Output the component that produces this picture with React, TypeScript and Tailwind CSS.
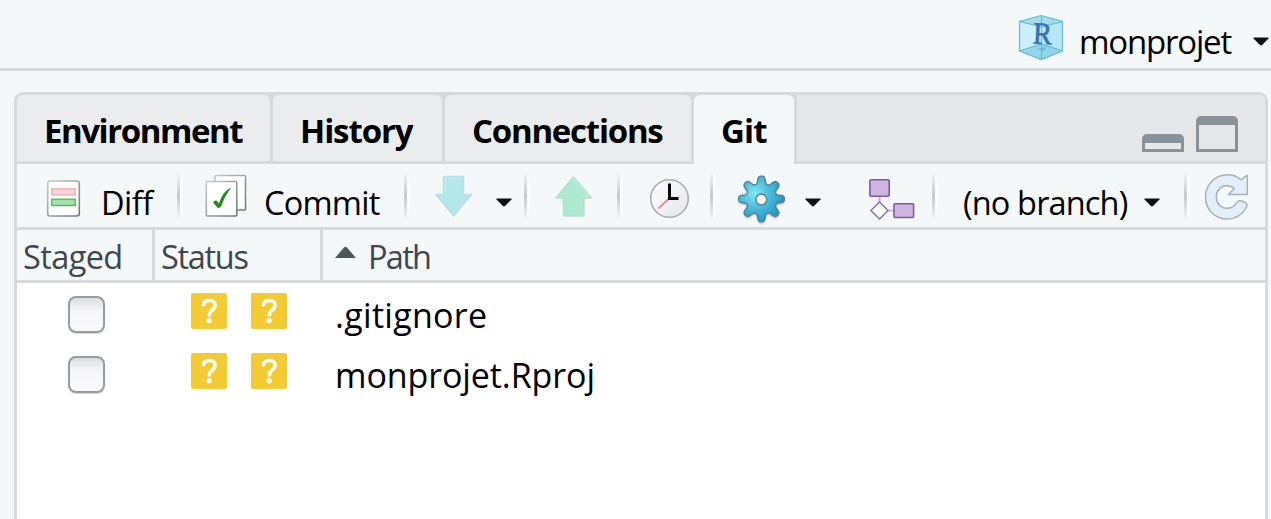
import type { ReactNode } from "react";

function ToolIcon({ x, w, className = "", children }: { x: number; w: number; className?: string; children: ReactNode }) {
  return (
    <svg width={w} height={63} viewBox={`${x} 164 ${w} 63`} className={`shrink-0 ${className}`}>
      {children}
    </svg>
  );
}

function Separator({ className }: { className: string }) {
  return (
    <div className={`mt-[7px] flex h-[50px] w-[6px] shrink-0 ${className}`}>
      <div className="w-[3px] bg-linear-to-b from-transparent via-[#c6c9cb] to-transparent" />
      <div className="w-[3px] bg-linear-to-b from-transparent via-white to-transparent" />
    </div>
  );
}

function Caret({ className = "" }: { className?: string }) {
  return (
    <svg width="16" height="9" viewBox="0 0 16 9" className={`shrink-0 ${className}`}>
      <path d="M0.5 0.5H15.5V1.5L8.8 8.2H7.2L0.5 1.5Z" fill="#111" />
    </svg>
  );
}

function ProjectIcon() {
  return (
    <svg width="46" height="47" viewBox="1018 14 46 47" className="shrink-0">
      <path d="M1041 15.5L1062.500 21.500V51L1041.500 59.500L1019.500 51V21.500Z" fill="#b9e5f8" />
      <path d="M1019.500 21.500L1041.500 27V59.500L1019.500 51Z" fill="#caf0fb" />
      <path d="M1019.500 51L1041.500 44L1062.500 51L1041.500 59.500Z" fill="#83cdea" opacity=".75" />
      <path d="M1019.500 21.500L1041 15.500L1062.500 21.500L1041.500 27Z" fill="#a5ddec" />
      <path d="M1041 15.500L1062.500 21.500V51L1041.500 59.500L1019.500 51V21.500ZM1019.500 21.500L1041.500 27L1062.500 21.500M1041.500 27V59.500M1041.500 16V27M1019.500 51L1041.500 44L1062.500 51" fill="none" stroke="#62bcd2" strokeWidth="1.2" />
      <text x="1033" y="44" fontFamily="Liberation Serif, serif" fontSize="31" fill="#386fb5" stroke="#386fb5" strokeWidth=".7" textLength="19" lengthAdjust="spacingAndGlyphs" transform="rotate(3 1041 34)">R</text>
      <path d="M1036 49L1047 47L1044 51Z" fill="#58afcf" opacity=".65" />
    </svg>
  );
}

const gearPath = (() => {
  const cx = 761.5;
  const cy = 199;
  const pts: string[] = [];
  for (let i = 0; i <= 160; i++) {
    const a = (i / 160) * Math.PI * 2;
    const wave = Math.tanh(1.7 * Math.cos(8 * a)) / Math.tanh(1.7);
    const r = 19.2 + 3.7 * wave;
    pts.push(`${(cx + r * Math.cos(a)).toFixed(2)} ${(cy + r * Math.sin(a)).toFixed(2)}`);
  }
  return `M${pts.join("L")}Z`;
})();

const barText = "shrink-0 whitespace-nowrap pt-[13px] text-[32.5px] leading-[51px]";

function Toolbar() {
  return (
    <div className="flex h-[66px] items-start border-b-[3px] border-[#d6dadc] bg-[#f4f8f9]">
      <ToolIcon x={45} w={38} className="ml-[28px]">
        <defs>
          <linearGradient id="page" x1="0" y1="0" x2="1" y2="1">
            <stop offset="0" stopColor="#c5cbd0" />
            <stop offset="1" stopColor="#6e7883" />
          </linearGradient>
        </defs>
        <rect x="47.700" y="181" width="31.600" height="35" rx="2.500" fill="#fff" stroke="url(#page)" strokeWidth="1.600" />
        <rect x="51.800" y="188.800" width="23.500" height="6.200" fill="#f5d5d5" stroke="#efb0b2" strokeWidth="1.400" />
        <rect x="51.800" y="199.300" width="23.500" height="6.200" fill="#a5e2a8" stroke="#5abf6b" strokeWidth="1.600" />
      </ToolIcon>
      <span className={`ml-[18px] w-[53px] tracking-[-0.5px] ${barText}`}>Diff</span>
      <Separator className="ml-[23px]" />
      <ToolIcon x={204} w={44} className="ml-[21px]">
        <rect x="215" y="175.500" width="30.500" height="34.500" rx="1" fill="#fff" stroke="url(#page)" strokeWidth="1.600" />
        <rect x="206.300" y="181.500" width="30.500" height="34.500" rx="1" fill="#fff" stroke="url(#page)" strokeWidth="1.600" />
        <path d="M213 202.500C214.500 200 216.500 199.800 217.500 201.500L219 203.500C221.500 196 225 190 231.500 187.800C227 193 223.500 199 221.500 206C219.500 208.500 217.500 208.500 216.500 206.500Z" fill="#238a1b" />
      </ToolIcon>
      <span className={`ml-[16px] w-[121px] tracking-[-0.75px] ${barText}`}>Commit</span>
      <Separator className="ml-[19px]" />
      <ToolIcon x={434} w={40} className="ml-[24px]">
        <path d="M444.500 176.500H462.500Q463.500 176.500 463.500 178V194.500H471.500L453.600 216L436 194.500H443.500V178Q443.500 176.500 444.500 176.500Z" fill="#b3e7ea" stroke="#bddde7" strokeWidth="1.600" strokeLinejoin="round" />
        <path d="M445.500 196V178.500H461.500" fill="none" stroke="#c6eff1" />
      </ToolIcon>
      <Caret className="ml-[22px] mt-[34px]" />
      <Separator className="ml-[12px]" />
      <ToolIcon x={554} w={40} className="ml-[24px]">
        <path d="M573.500 177L591.500 198H584V215Q584 216 583 216H564.500Q563.500 216 563.500 215V198H556Z" fill="#aeead0" stroke="#b9dfc9" strokeWidth="1.600" strokeLinejoin="round" />
        <path d="M573.500 179L589 196.500H582.500" fill="none" stroke="#c2f2dd" />
      </ToolIcon>
      <Separator className="ml-[23px]" />
      <ToolIcon x={648} w={44} className="ml-[25px]">
        <defs>
          <linearGradient id="dial" x1="0" y1="0" x2="1" y2="1">
            <stop offset="0" stopColor="#fff" />
            <stop offset="1" stopColor="#e2e5e7" />
          </linearGradient>
        </defs>
        <circle cx="669.500" cy="198.500" r="18.800" fill="url(#dial)" stroke="#a9adb0" strokeWidth="1.600" />
        <path d="M668.500 199L658.300 208.500" stroke="#f08a8a" strokeWidth="2" />
        <path d="M669.500 183.500V198.600H678.500" stroke="#080808" strokeWidth="3" fill="none" />
      </ToolIcon>
      <Separator className="ml-[18px]" />
      <ToolIcon x={736} w={52} className="ml-[20px]">
        <defs>
          <radialGradient id="gear" cx=".36" cy=".38" r=".62">
            <stop offset="0" stopColor="#82e9f4" />
            <stop offset=".5" stopColor="#4cbcdc" />
            <stop offset="1" stopColor="#249bc6" />
          </radialGradient>
          <filter id="gearShadow" x="-10%" y="-10%" width="120%" height="125%">
            <feGaussianBlur stdDeviation="1" />
          </filter>
        </defs>
        <path d={gearPath} fill="#8b969b" opacity=".55" transform="translate(0 2)" filter="url(#gearShadow)" />
        <path d={gearPath} fill="url(#gear)" stroke="#547f95" strokeWidth="1.400" />
        <circle cx="761.300" cy="199.500" r="5.400" fill="#f4f8f9" stroke="#6a8797" strokeWidth="1.600" />
      </ToolIcon>
      <Caret className="ml-[17px] mt-[34px]" />
      <ToolIcon x={867} w={50} className="ml-[46px]">
        <path d="M879.500 196V202M888 210.500H894" stroke="#cbb5de" strokeWidth="2.200" />
        <rect x="869.900" y="179.800" width="19.300" height="16.500" rx="1" fill="#cbb7de" stroke="#8556a8" strokeWidth="1.600" />
        <rect x="894" y="203.800" width="19.600" height="13.700" rx="1" fill="#cbb7de" stroke="#8556a8" strokeWidth="1.600" />
        <path d="M879.500 202L888 210.500L879.500 219L871 210.500Z" fill="#fff" stroke="#966bb5" strokeWidth="1.500" />
      </ToolIcon>
      <Separator className="ml-[15px]" />
      <span className={`ml-[25px] w-[169px] tracking-[-0.85px] ${barText}`}>(no branch)</span>
      <Caret className="ml-[12px] mt-[34px]" />
      <Separator className="ml-[24px]" />
      <ToolIcon x={1205} w={46} className="ml-[14px]">
        <path d="M1248.300 175.500V194.600H1229.500L1235.300 188.500C1233 186.400 1230.200 185.700 1227.700 185.700C1221.500 185.700 1217.300 190.500 1217.300 197C1217.300 203.500 1221.500 208.200 1227.700 208.200C1232.500 208.200 1236 205.800 1238 202.300C1240.200 199 1250.500 202.500 1247.500 207C1243.500 214.500 1236.500 219 1228.500 219C1216 219 1206.500 209.500 1206.500 197C1206.500 184.500 1216 174.700 1228.500 174.700C1234 174.700 1238.500 176.500 1242 179.800C1244.300 178 1246.500 176.200 1248.300 175.500Z" fill="#e3eefb" stroke="#a9b0b8" strokeWidth="1.500" strokeLinejoin="round" />
      </ToolIcon>
    </div>
  );
}

function Unknown() {
  return (
    <svg width="36" height="36" viewBox="0 0 36 36">
      <rect width="36" height="36" rx="2" fill="#f3cb35" />
      <path d="M12.500 11.800C13 8.900 15 7.500 18.300 7.500C22.100 7.500 24.200 9.600 24.200 12.600C24.200 17 18.300 17.500 18.300 22" fill="none" stroke="#fffdf5" strokeWidth="3.600" strokeLinecap="round" />
      <circle cx="18.200" cy="27.700" r="2.600" fill="#fffdf5" />
    </svg>
  );
}

function FileRow({ path, tracking }: { path: string; tracking: string }) {
  return (
    <div className="flex h-[60px] items-start">
      <div className="ml-[51px] mt-[13px] h-[37px] w-[37px] rounded-[8px] border-2 border-[#979ca1] bg-linear-to-b from-[#dcdee1] via-[#f6f6f8] via-40% to-[#fafafc] shadow-[0_1px_1px_#d5d5d5]" />
      <div className="ml-[86px] mt-[10px] flex gap-[24px]">
        <Unknown />
        <Unknown />
      </div>
      <span className={`ml-[48px] whitespace-nowrap text-[34px] leading-[64px] ${tracking}`}>{path}</span>
    </div>
  );
}

const inactiveTab = "h-[66px] shrink-0 rounded-t-[6px] bg-[#ebecee] pt-[7px] pl-[27px]";

export default function App() {
  return (
    <div className="flex h-[519px] w-[1271px] flex-col overflow-hidden bg-[#f6f7f9] font-['Open_Sans','Noto_Sans',sans-serif] text-black">
      <header className="flex h-[71px] shrink-0 items-start border-b-[3px] border-[#d6dadc] bg-[#f4f8f9] pl-[1018px]">
        <div className="mt-[14px] flex shrink-0"><ProjectIcon /></div>
        <span className="ml-[15px] w-[157px] shrink-0 text-[33px] leading-[83px] tracking-[-1.2px]">monprojet</span>
        <Caret className="ml-[17px] mt-[37px]" />
      </header>
      <main className="ml-[14px] mt-[21px] flex h-[427px] w-[1254px] shrink-0 flex-col overflow-hidden rounded-t-[9px] border-x-[3px] border-t-[3px] border-[#d6dadc] bg-white">
        <nav className="flex h-[69px] shrink-0 bg-[#e6e7e9] text-[33px] font-bold leading-[58px]">
          <div className="flex gap-[3px] border-b-[3px] border-[#d6dadc] bg-[#d6dadc] pr-[3px]">
            <div className={`w-[253px] tracking-[-1.45px] ${inactiveTab}`}>Environment</div>
            <div className={`w-[169px] tracking-[-1.1px] ${inactiveTab}`}>History</div>
            <div className={`w-[246px] tracking-[-1.25px] ${inactiveTab}`}>Connections</div>
          </div>
          <div className="flex bg-[#d6dadc] pr-[3px]">
            <div className="w-[100px] rounded-t-[6px] bg-[#f4f8f9] pl-[27px] pt-[7px] tracking-[-0.8px]">Git</div>
          </div>
          <div className="flex grow items-end justify-end gap-[12px] rounded-tl-[3px] border-b-[3px] border-[#d6dadc] pb-[9px] pr-[27px]">
            <div className="h-[18px] w-[42px] rounded-t-[5px] border-x-[3px] border-b-[3px] border-t-[9px] border-[#899298] bg-[#e6e7e9]" />
            <div className="h-[36px] w-[42px] rounded-t-[5px] border-x-[3px] border-b-[3px] border-t-[9px] border-[#899298]" />
          </div>
        </nav>
        <Toolbar />
        <div className="flex h-[53px] shrink-0 border-b-[3px] border-[#d6dadc] bg-[#f4f8f9] text-[32.5px] leading-[54px] text-[#3f474d]">
          <div className="w-[138px] border-r-[3px] border-[#d6dadc] pl-[6px] tracking-[-0.6px]">Staged</div>
          <div className="w-[168px] border-r-[3px] border-[#d6dadc] pl-[6px] tracking-[-1.3px]">Status</div>
          <div className="flex items-start pl-[12px]">
            <svg width="21" height="11" viewBox="0 0 21 11" className="mt-[17px]">
              <path d="M0 11L9.500 0H11.500L21 11Z" fill="#4d575d" />
            </svg>
            <span className="ml-[12px] tracking-[-1.7px]">Path</span>
          </div>
        </div>
        <FileRow path=".gitignore" tracking="tracking-[0.3px]" />
        <FileRow path="monprojet.Rproj" tracking="tracking-[-0.1px]" />
      </main>
    </div>
  );
}
